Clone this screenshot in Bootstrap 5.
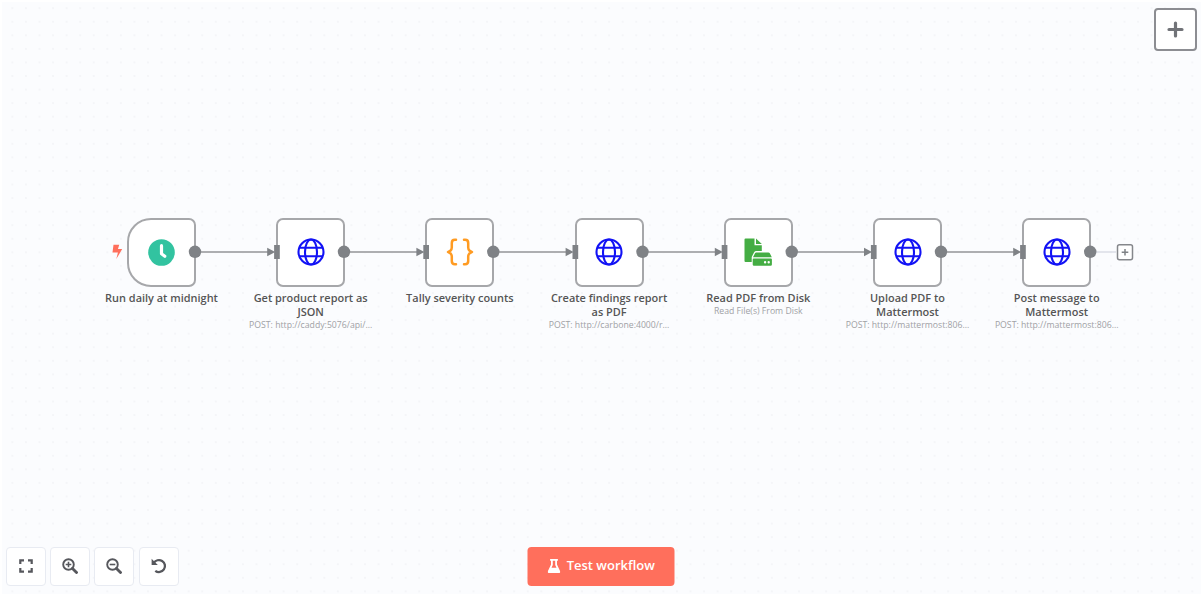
<!DOCTYPE html>
<html lang="en">
<head>
<meta charset="utf-8">
<meta name="viewport" content="width=device-width, initial-scale=1">
<title>Workflow</title>
<link href="https://cdn.jsdelivr.net/npm/bootstrap@5.3.0/dist/css/bootstrap.min.css" rel="stylesheet">
<style>
body{font-family:"Open Sans",sans-serif;background:#fff;color:#555}
.editor{height:595px;padding:1.5px 0 1.5px 1.5px}
.canvas{background-color:#fbfcfe;background-image:radial-gradient(circle,#f3f4f7 0,#f3f4f7 .6px,transparent 1.1px);background-size:13.57px 13.57px;background-position:3.6px -.6px}
.node{width:136px;top:216px;transform:translateX(-50%)}
.tile{width:69px;height:69px;border:2px solid #a6a7aa;border-radius:7px;background:#fff}
.tile.start{border-radius:24px 7px 7px 24px}
.title{font-size:10.95px;font-weight:600;line-height:14px;color:#555;margin-top:4px;white-space:pre-line}
.sub{font-size:8.7px;line-height:12px;color:#a0a1a5;white-space:nowrap}
.ctl{width:40px;height:39px;background:#fff;border:1px solid #e8ebf2;border-radius:4px;color:#56575c;padding:0}
.add{width:43px;height:43px;background:#fff;border:2px solid #8c8d92;border-radius:4px;padding:0;color:#717378}
.run{width:147px;height:39px;background:#ff6f5c;border:0;border-radius:4px;color:#fff;font-size:13px;font-weight:600;padding:0}
.run:hover{background:#ff6f5c;color:#fff}
svg{display:block;flex:none}
</style>
</head>
<body class="overflow-hidden">
<svg width="0" height="0" class="position-absolute">
<defs>
<symbol id="globe" viewBox="0 0 28 28"><g fill="none" stroke="#1212f5" stroke-width="2.1"><circle cx="14" cy="14" r="12.5"/><ellipse cx="14" cy="14" rx="6" ry="12.5"/><path d="M2.1 9.7h23.8M2.1 18.3h23.8"/></g></symbol>
<g id="port"><path d="M-10-4.3v8.6L-2 0z"/><path d="M-3.1-7h5.7V7h-5.7z"/></g>
</defs>
</svg>
<main class="editor">
<div class="canvas position-relative w-100 h-100">
  <div class="node position-absolute text-center" style="left:160px"><div class="tile start mx-auto d-flex align-items-center justify-content-center">
    <svg width="27" height="27" viewBox="0 0 27 27"><circle cx="13.5" cy="13.5" r="13.3" fill="#32c3a0"/><path d="M13.5 6.7v8.1l3.3 2.4" fill="none" stroke="#fff" stroke-width="3.2" stroke-linecap="round" stroke-linejoin="round"/></svg></div>
    <div class="title">Run daily at midnight</div></div>
  <div class="node position-absolute text-center" style="left:309.2px"><div class="tile mx-auto d-flex align-items-center justify-content-center"><svg width="28" height="28"><use href="#globe"/></svg></div>
    <div class="title">Get product report as
JSON</div><div class="sub">POST: http://caddy:5076/api/...</div></div>
  <div class="node position-absolute text-center" style="left:458.4px"><div class="tile mx-auto d-flex align-items-center justify-content-center">
    <svg width="28" height="28" viewBox="0 0 28 28" fill="none" stroke="#ff9b22" stroke-width="2.5" stroke-linecap="round" stroke-linejoin="round"><path d="M10 1.800H8.800Q5.800 1.800 5.800 5v4.500Q5.800 11.200 4.500 12.600L2 14l2.500 1.400q1.300 1.400 1.300 3.100V23q0 3.200 3 3.200H10M18 1.800h1.200q3 0 3 3.200v4.500q0 1.700 1.300 3.100l2.500 1.400-2.500 1.400q-1.300 1.400-1.300 3.100V23q0 3.200-3 3.200H18"/></svg></div>
    <div class="title">Tally severity counts</div></div>
  <div class="node position-absolute text-center" style="left:607.6px"><div class="tile mx-auto d-flex align-items-center justify-content-center"><svg width="28" height="28"><use href="#globe"/></svg></div>
    <div class="title">Create findings report
as PDF</div><div class="sub">POST: http://carbone:4000/r...</div></div>
  <div class="node position-absolute text-center" style="left:756.8px"><div class="tile mx-auto d-flex align-items-center justify-content-center">
    <svg width="28" height="28" viewBox="0 0 28 28" fill="#44ad43"><path d="M1.5.5h9v6.800H17.800v5.800h-5.400q-1.600 0-2.400 1.400l-2.300 4.400v5H1.500Q.5 23.900.5 22.900V1.500Q.5.500 1.500.500z"/><path d="M12 .5l5.800 5.600H12z"/><path d="M12.200 14.400h12.200q.9 0 1.400.8l2 4H9l2-4q.4-.8 1.200-.8z"/><path fill-rule="evenodd" d="M9.500 20.400h17.400q1 0 1 1v5q0 1.300-1.300 1.300H10q-1.300 0-1.300-1.300v-5.200q0-.8.8-.8zm11.600 2.600a1.200 1.200 0 100 2.400 1.200 1.200 0 000-2.400zm3.600 0a1.200 1.200 0 100 2.400 1.200 1.200 0 000-2.400z"/></svg></div>
    <div class="title">Read PDF from Disk</div><div class="sub">Read File(s) From Disk</div></div>
  <div class="node position-absolute text-center" style="left:906px"><div class="tile mx-auto d-flex align-items-center justify-content-center"><svg width="28" height="28"><use href="#globe"/></svg></div>
    <div class="title">Upload PDF to
Mattermost</div><div class="sub">POST: http://mattermost:806...</div></div>
  <div class="node position-absolute text-center" style="left:1055.2px"><div class="tile mx-auto d-flex align-items-center justify-content-center"><svg width="28" height="28"><use href="#globe"/></svg></div>
    <div class="title">Post message to
Mattermost</div><div class="sub">POST: http://mattermost:806...</div></div>

  <!-- connections, ports and trigger mark -->
  <svg class="position-absolute" style="left:-1.5px;top:-1.5px" width="1201" height="592" viewBox="0 0 1201 592">
    <path d="M195 252h74M344 252h74M493.5 252h74M642.5 252h74M792 252h74M941 252h74" stroke="#adaeb1" stroke-width="2"/>
    <path d="M1096 252h20" stroke="#d6d9e2" stroke-width="1.3"/>
    <g fill="#7f8286">
      <circle cx="195" cy="251.800" r="6.2"/><circle cx="344" cy="251.800" r="6.2"/><circle cx="493.300" cy="251.800" r="6.2"/><circle cx="642.500" cy="251.800" r="6.2"/><circle cx="791.700" cy="251.800" r="6.2"/><circle cx="941" cy="251.800" r="6.2"/><circle cx="1090.200" cy="251.800" r="6.2"/>
      <use href="#port" x="277.200" y="252"/><use href="#port" x="426.400" y="252"/><use href="#port" x="575.600" y="252"/><use href="#port" x="724.800" y="252"/><use href="#port" x="874" y="252"/><use href="#port" x="1023.200" y="252"/>
    </g>
    <path d="M113.500 244.800h5.700l-1.200 4.300h4.200l-5.900 10 1.600-6.500h-5.400z" fill="#ff6f5c"/>
    <rect x="1117.500" y="244.800" width="15" height="15" rx="2" fill="#fff" stroke="#85878b" stroke-width="1.500"/>
    <path d="M1121.700 252.300h6.600M1125 249v6.600" stroke="#7f8286" stroke-width="1.500"/>
  </svg>

  <button class="btn add position-absolute d-flex align-items-center justify-content-center" style="right:4px;top:6.400px" aria-label="Add node"><svg width="17" height="17" viewBox="0 0 17 17"><path d="M2 8.500h13M8.500 2v13" stroke="currentColor" stroke-width="3.200" stroke-linecap="round"/></svg></button>

  <div class="position-absolute bottom-0 start-0 d-flex" style="gap:4.300px;padding:0 0 8px 4.400px">
    <button class="btn ctl d-flex align-items-center justify-content-center" aria-label="Fit view"><svg width="14" height="14" viewBox="0 0 14 14" fill="none" stroke="currentColor" stroke-width="2.200"><path d="M1.300 5V1.300H5M9 1.300h3.700V5M12.700 9v3.700H9M5 12.700H1.300V9"/></svg></button>
    <button class="btn ctl d-flex align-items-center justify-content-center" aria-label="Zoom in"><svg width="16" height="16" viewBox="0 0 16 16" fill="none" stroke="currentColor"><circle cx="6.500" cy="6.500" r="5.300" stroke-width="1.900"/><path d="M10.500 10.500l4 4" stroke-width="2.900" stroke-linecap="round"/><path d="M3.700 6.500h5.600M6.500 3.700v5.600" stroke-width="1.600"/></svg></button>
    <button class="btn ctl d-flex align-items-center justify-content-center" aria-label="Zoom out"><svg width="16" height="16" viewBox="0 0 16 16" fill="none" stroke="currentColor"><circle cx="6.500" cy="6.500" r="5.300" stroke-width="1.900"/><path d="M10.500 10.500l4 4" stroke-width="2.900" stroke-linecap="round"/><path d="M3.700 6.500h5.600" stroke-width="1.600"/></svg></button>
    <button class="btn ctl d-flex align-items-center justify-content-center" aria-label="Reset zoom"><svg width="16" height="16" viewBox="0 0 16 16" fill="none" stroke="currentColor" stroke-width="2.300"><path d="M2.700 5.200A6 6 0 1 1 4.300 12.800"/><path d="M.6.700v6.200h6.200z" fill="currentColor" stroke="none"/></svg></button>
  </div>

  <div class="position-absolute bottom-0 start-50 translate-middle-x" style="padding-bottom:8px">
    <button class="btn run d-flex align-items-center justify-content-center"><svg width="13" height="16" viewBox="0 0 14 16"><path fill="#fff" fill-rule="evenodd" d="M2.800.5h8.400v1.900h-1v4.100l3.300 6.800q.9 2.200-1.500 2.200H2Q-.4 15.500.5 13.300l3.300-6.800V2.400h-1zM5.700 2.400v4.500L4.300 10h5.400L8.300 6.900V2.400z"/></svg><span style="margin-left:6px">Test workflow</span></button>
  </div>
</div>
</main>
<script src="https://cdn.jsdelivr.net/npm/bootstrap@5.3.0/dist/js/bootstrap.bundle.min.js"></script>
</body>
</html>
